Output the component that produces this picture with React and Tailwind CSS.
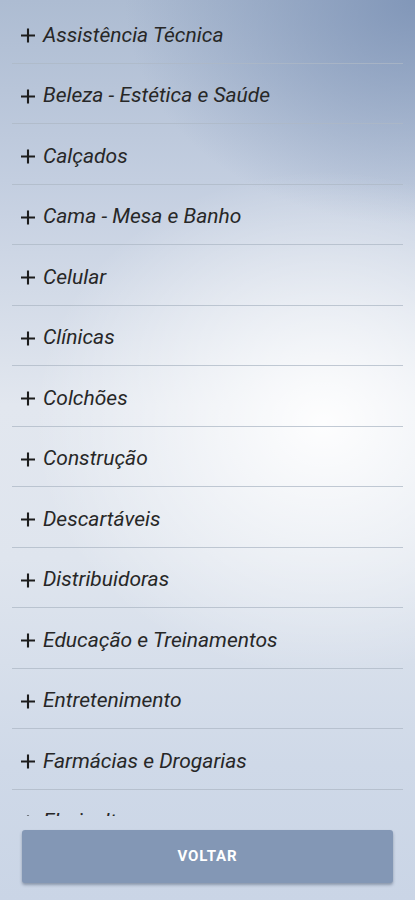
import React from "react";

const items = [
  "Assistência Técnica",
  "Beleza - Estética e Saúde",
  "Calçados",
  "Cama - Mesa e Banho",
  "Celular",
  "Clínicas",
  "Colchões",
  "Construção",
  "Descartáveis",
  "Distribuidoras",
  "Educação e Treinamentos",
  "Entretenimento",
  "Farmácias e Drogarias",
  "Floriculturas",
  "Fotografia",
];

function Plus() {
  return (
    <svg width="16" height="16" viewBox="0 0 16 16" className="shrink-0">
      <path d="M1 8.5H15M8 1.5V15.5" stroke="#1c1c1c" strokeWidth="2.1" fill="none" />
    </svg>
  );
}

export default function App() {
  return (
    <div
      className="w-[415px] h-[900px] flex flex-col overflow-hidden bg-[radial-gradient(ellipse_70%_28%_at_78%_47%,rgba(255,255,255,0.95)_0%,rgba(255,255,255,0)_100%),radial-gradient(ellipse_70%_25%_at_100%_0%,rgba(125,147,182,0.9)_0%,rgba(125,147,182,0)_100%),linear-gradient(180deg,#adbcd2_0%,#c3cee0_20%,#e2e7ef_45%,#dfe5ee_62%,#cfd9e8_85%,#cad5e6_100%)]"
      style={{ fontFamily: "Roboto, 'Noto Sans', sans-serif" }}
    >
      <div className="flex-1 overflow-hidden px-3 pt-[3px]">
        {items.map((t) => (
          <div
            key={t}
            className="h-[60.5px] box-border border-b border-[#aeb8c6]/75 flex items-center pt-[5px] pl-[8px] gap-[7px]"
          >
            <Plus />
            <span className="italic text-[21px] text-[#272727] leading-none">{t}</span>
          </div>
        ))}
      </div>
      <div className="px-[22px] pt-[14px] pb-[17px]">
        <button className="w-full h-[53px] rounded-[3px] bg-[#8397b5] shadow-[0_2px_3px_rgba(60,75,100,0.45)] text-white font-bold text-[15px] tracking-[0.06em]">
          VOLTAR
        </button>
      </div>
    </div>
  );
}
